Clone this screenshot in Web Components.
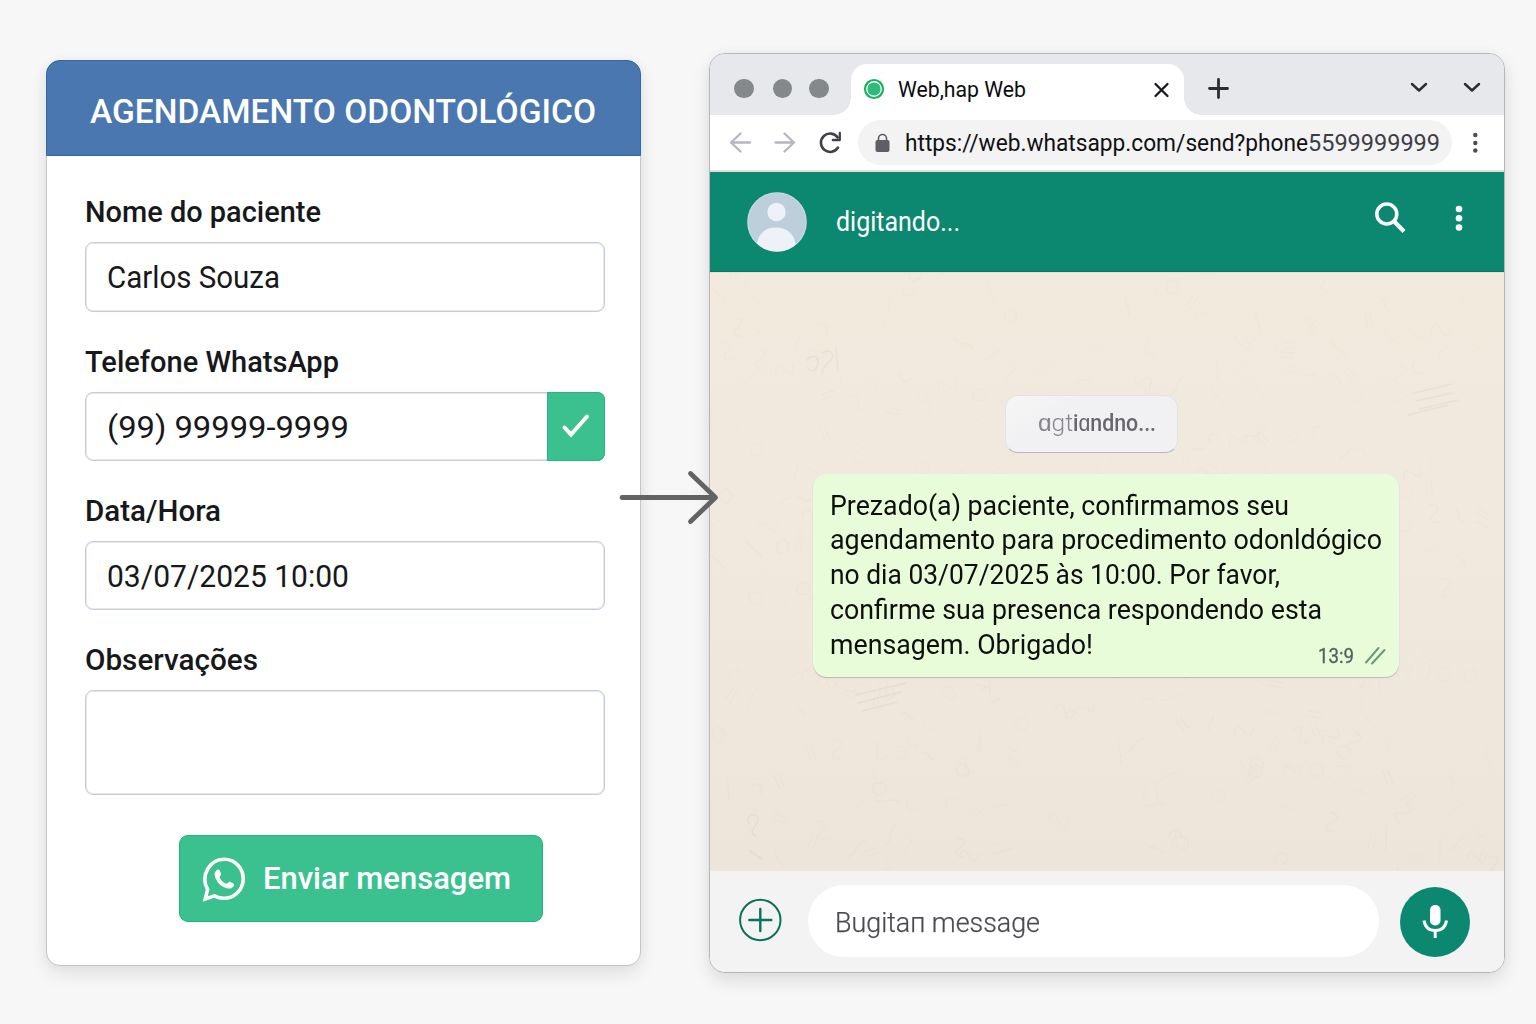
<!DOCTYPE html>
<html lang="pt-BR">
<head>
<meta charset="utf-8">
<title>Agendamento Odontológico</title>
<style>
html,body{margin:0;height:100%}
body{background:#f6f6f6;font-family:Roboto,"Liberation Sans",sans-serif;color:#17181b;overflow:hidden}
</style>
</head>
<body>
<demo-stage></demo-stage>
<script>
const define=(name,html,setup)=>customElements.define(name,class extends HTMLElement{
  constructor(){super();this.attachShadow({mode:'open'}).innerHTML=html;}
  connectedCallback(){if(setup)setup.call(this,this.shadowRoot);}
});

/* Single line of text condensed or expanded to the width in "w". */
define('fit-text',`<style>
:host{display:block;white-space:pre;flex:none}
span{display:inline-block;transform-origin:0 50%}
</style><span><slot></slot></span>`,function(r){
  const w=+this.getAttribute('w'),s=r.querySelector('span');
  this.style.width=w+'px';
  const fit=()=>{s.style.transform='none';const n=s.getBoundingClientRect().width;if(n)s.style.transform='scaleX('+w/n+')';};
  fit();requestAnimationFrame(fit);
});

define('form-field',`<style>
:host{display:block}
.label{font-size:29.500px;line-height:34px;font-weight:500;height:34px;margin-bottom:13px}
.box{display:flex;align-items:center;box-sizing:border-box;height:var(--h,69px);border:1px solid #c6cad9;border-radius:8px;background:#fff;box-shadow:inset 0 0 0 1px #e6e8f0;padding:2px 0 0 21px;font-size:31px;line-height:36px}
</style>
<div class="label"><slot name="label"></slot></div>
<div class="box"><slot></slot><slot name="end"></slot></div>`);

define('valid-mark',`<style>
:host{display:flex;align-items:center;justify-content:center;width:58px;height:69px;margin:-3px -1px -1px auto;background:#3bc18f;border-radius:0 8px 8px 0;box-shadow:inset 0 0 0 1px #25b880}
</style><svg width="58" height="70" viewBox="0 0 58 70" fill="none" stroke="#fff" stroke-width="4" stroke-linecap="round" stroke-linejoin="miter"><path d="M17.500 35.500 24 42.500 40 24.500"/></svg>`);

define('send-button',`<style>
:host{display:flex;align-items:center;box-sizing:border-box;width:364px;height:87px;border-radius:9px;background:#3bc18f;border:1px solid #20b67b;color:#fff;padding-left:22px;gap:17px;font-size:31px;font-weight:500;line-height:36px}
</style>
<svg width="44" height="46" viewBox="0 0 44 46"><path d="M3.200 43 5.600 33.400C-1.700 20.500 7 3.200 22.200 3.200c10.800 0 19 8.700 19 19.500s-8.500 19.600-19.300 19.600c-3.500 0-6.500-.8-9.400-2.400Z" fill="none" stroke="#fff" stroke-width="3.600" stroke-linejoin="miter"/><path d="M14.300 14.400c1.100-1.200 2.700-1.200 3.400.2l1.200 3c.4 1-.1 1.800-.9 2.600-.6.700-.4 1.400 0 2.100 1.500 2.500 3.400 4.300 5.900 5.300.8.300 1.300.1 1.900-.6.900-1.100 1.600-1.400 2.600-1l2.900 1.500c1 .5.900 1.500.4 2.500-1 2-3.300 2.900-5.500 2.500-7-1.200-12.700-7-13.600-13.800-.2-1.700.6-3.200 1.700-4.300Z" fill="#fff"/></svg>
<slot></slot>`);

define('booking-card',`<style>
:host{display:flex;flex-direction:column;box-sizing:border-box;width:595px;height:906px;border:1px solid #c3c5cb;border-radius:14px;background:#fff;box-shadow:0 8px 18px rgba(0,0,0,.09),0 0 12px rgba(0,0,0,.03)}
header{margin:-1px -1px 0;height:96px;flex:none;box-sizing:border-box;background:#4a77b0;border:1px solid #2f69ab;border-radius:14px 14px 0 0;color:#fff;display:flex;align-items:center;padding:5px 0 0 43px;font-size:34px;font-weight:500;line-height:40px}
main{display:flex;flex-direction:column;padding:39px 35px 0 38px}
form-field{margin-bottom:33px}
form-field:first-of-type{--h:70px}
form-field:last-of-type{margin-bottom:40px;--h:105px}
send-button{margin-left:94px}
</style>
<header><fit-text w="506">AGENDAMENTO ODONTOLÓGICO</fit-text></header>
<main>
<form-field><fit-text slot="label" w="236">Nome do paciente</fit-text><fit-text w="173">Carlos Souza</fit-text></form-field>
<form-field><fit-text slot="label" w="254">Telefone WhatsApp</fit-text><fit-text w="242">(99) 99999-9999</fit-text><valid-mark slot="end"></valid-mark></form-field>
<form-field><fit-text slot="label" w="136">Data/Hora</fit-text><fit-text w="242">03/07/2025 10:00</fit-text></form-field>
<form-field><fit-text slot="label" w="173">Observações</fit-text></form-field>
<send-button><fit-text w="248">Enviar mensagem</fit-text></send-button>
</main>`);

define('tab-strip',`<style>
:host{display:flex;height:61px;background:#e7e8ec;align-items:flex-end}
.dots{display:flex;gap:19px;width:141px;box-sizing:border-box;padding-left:24px;height:61px;align-items:center;padding-top:8px}
i{width:19.500px;height:19.500px;border-radius:50%;background:#85888b;flex:none}
i:last-child{margin-left:-2px}
.tab{position:relative;display:flex;align-items:center;box-sizing:border-box;width:333px;height:51px;background:#fff;border-radius:16px 16px 0 0;padding-left:12px;font-size:21.500px;line-height:26px;color:#0c0c0e}
.tab::before,.tab::after{content:"";position:absolute;bottom:0;width:17px;height:17px}
.tab::before{right:100%;background:radial-gradient(circle at 0 0,transparent 16.500px,#fff 17px)}
.tab::after{left:100%;background:radial-gradient(circle at 100% 0,transparent 16.500px,#fff 17px)}
fit-text{margin-left:13px;margin-top:1px}
.x{margin-left:126px;margin-top:1px}
.ring{margin-top:-1px}
.rest{display:flex;flex:1;height:61px}
</style>
<div class="dots"><i></i><i></i><i></i></div>
<div class="tab"><svg class="ring" width="22" height="22" viewBox="0 0 22 22"><circle cx="11" cy="11" r="9" fill="#fff" stroke="#16b364" stroke-width="2.200"/><circle cx="11" cy="11" r="6.600" fill="#2fba79"/></svg><fit-text w="128">Web,hap Web</fit-text>
<svg class="x" width="20" height="20" viewBox="0 0 20 20" stroke="#18191c" stroke-width="2.300" stroke-linecap="round"><path d="M3.500 4l12 12M15.500 4l-12 12"/></svg></div>
<div class="rest"><svg width="319" height="61" viewBox="0 0 319 61" fill="none" stroke="#2c2d31" stroke-width="2.400" stroke-linecap="round" stroke-linejoin="round"><path stroke-width="2.800" d="M25.500 34.500h18M34.500 25.500v18"/><path d="M228 30l7 6.500 7-6.500M281 30l7 6.500 7-6.500"/></svg></div>`);

define('address-bar',`<style>
:host{display:flex;align-items:center;height:57px;background:#fff;border-bottom:2px solid #e2ddda;box-sizing:border-box}
.nav{flex:none}
.url{display:flex;align-items:center;box-sizing:border-box;width:594px;height:45px;border-radius:23px;background:#f3f3f4;padding-left:17px;gap:15px;font-size:24px;line-height:28px;color:#101114}
.t{display:flex}
.n{color:#3c3e46}
</style>
<svg class="nav" width="148" height="54" viewBox="0 0 148 54" fill="none" stroke="#b4b7be" stroke-width="2.300" stroke-linecap="round" stroke-linejoin="round"><path d="M40 26.500H21.500M30.500 17.500l-9.500 9 9.500 9M65.500 26.500H84M74.500 17.500l9.500 9-9.500 9"/><path stroke="#3f4146" stroke-width="2.600" d="M128 31.500a9.200 9.200 0 1 1-.3-10"/><path stroke="#3f4146" stroke-width="2.300" d="M129.800 17v7h-7"/></svg>
<div class="url"><svg width="15" height="20" viewBox="0 0 15 20"><path d="M3.500 8V5.500a4 4 0 0 1 8 0V8" fill="none" stroke="#5d5f64" stroke-width="1.600"/><rect x=".5" y="7" width="14" height="12" rx="2" fill="#5d5f64"/></svg>
<div class="t"><fit-text w="403">https://web.whatsapp.com/send?phone</fit-text><fit-text class="n" w="132">5599999999</fit-text></div></div>
<svg class="nav" width="50" height="54" viewBox="0 0 50 54" fill="#4c4e53"><circle cx="23.300" cy="19" r="2.200"/><circle cx="23.300" cy="27" r="2.200"/><circle cx="23.300" cy="34.500" r="2.200"/></svg>`);

define('chat-header',`<style>
:host{display:flex;align-items:center;height:100px;background:#0c8770;border-bottom:1px solid #087961;box-sizing:border-box;padding-left:36.500px;color:#fff;font-size:27px;line-height:32px}
fit-text{margin-left:29.500px}
.act{margin-left:auto}
</style>
<svg width="60" height="60" viewBox="0 0 60 60"><defs><clipPath id="c"><circle cx="30" cy="30" r="29.500"/></clipPath></defs><circle cx="30" cy="30" r="29.800" fill="#d3e1e9"/><circle cx="30" cy="30" r="29" fill="#bccfdb"/><g clip-path="url(#c)" fill="#eef1f8"><circle cx="29.500" cy="20" r="9.200"/><path d="M9.500 56C10 43 17 35.500 29 35.500S48.500 43 49 56L40 61H20Z"/></g></svg>
<fit-text w="124">digitando...</fit-text>
<svg class="act" width="134" height="100" viewBox="0 0 134 100" fill="none" stroke="#fff"><circle cx="16.800" cy="42" r="10" stroke-width="3.500"/><path d="M23.800 49 34 59.500" stroke-width="4.200" stroke-linecap="butt"/><g fill="#fff" stroke="none"><circle cx="89" cy="37" r="3.300"/><circle cx="89" cy="46.300" r="3.300"/><circle cx="89" cy="55.500" r="3.300"/></g></svg>`);

define('typing-pill',`<style>
:host{display:flex;align-items:center;box-sizing:border-box;width:173px;height:58px;border-radius:13px;background:linear-gradient(145deg,#f7f6f6,#f1f1f3 30%);border:1px solid #e5e2e3;border-bottom-color:#b9b5ba;padding-left:32px;font-size:24px;line-height:28px;color:#66676c;font-weight:500}
.a{font-weight:300;color:#85868b}
.t{display:flex;margin-top:-2px}
</style><div class="t"><fit-text class="a" w="35">ɑgt</fit-text><fit-text w="83">iɑndno...</fit-text></div>`);

define('message-bubble',`<style>
:host{display:flex;flex-direction:column;box-sizing:border-box;width:586px;height:203px;border-radius:14px;background:#e8fcda;padding:14.500px 17px 0;font-size:27.500px;line-height:34.800px;color:#0e100e;box-shadow:0 1px 1px rgba(120,90,80,.35)}
.meta{display:flex;align-items:center;margin-left:auto;margin-top:-18px;margin-right:-6px;gap:10px;font-size:20px;line-height:24px;color:#54615a;-webkit-text-stroke:.3px #54615a}
</style><slot></slot><div class="meta"><fit-text w="36">13:9</fit-text><svg width="24" height="20" viewBox="0 0 24 20" stroke="#6f9579" stroke-width="2" stroke-linecap="round"><path d="M2 16.500 14.500 2M8 17.500 20.500 4"/></svg></div>`);

/* Chat area with a faint doodle wallpaper. */
define('chat-body',`<style>
:host{display:grid;height:599px;background:linear-gradient(#f3eade,#f1e8de 40%,#ede4da);border-top:1px solid #eaddd3;box-sizing:border-box}
svg,.col{grid-area:1/1}
.col{display:flex;flex-direction:column;align-items:flex-start;padding-top:122px;gap:21px}
typing-pill{margin-left:295px}
message-bubble{margin-left:103px}
</style>
<svg width="794" height="598" viewBox="0 0 794 598" fill="none" stroke="#cdbdae" stroke-width="1.200" stroke-linecap="round"><g id="d" opacity=".11"></g>
<g stroke="#bda999" opacity=".13" stroke-width="1.600"><path d="M97 87c5-6 12-4 11 3s-7 11-10 5M112 80c8-5 14 2 9 7s-10 10-9 14M126 75l2 22M704 120l38-9M706 128l36-8M710 136l38-9M698 142l40-10M146 422l50-12M148 430l43-11M152 438l35-9M39 550c-5-8 9-12 9-4s-12 12-2 17M40 578l12 8"/></g></svg>
<div class="col"><typing-pill></typing-pill>
<message-bubble>
<fit-text w="459">Prezado(a) paciente, confirmamos seu</fit-text>
<fit-text w="552">agendamento para procedimento odonldógico</fit-text>
<fit-text w="450">no dia 03/07/2025 às 10:00. Por favor,</fit-text>
<fit-text w="492">confirme sua presenca respondendo esta</fit-text>
<fit-text w="263">mensagem. Obrigado!</fit-text>
</message-bubble></div>`,function(r){
  let seed=11;const rnd=()=>(seed=(seed*16807)%2147483647)/2147483647;
  const shapes=['M0 0c4-8 14-6 12 2s-12 9-12-2','M0 0l11-9M3 4l11-9','M0 0c5 9 13 5 18 12','M0 0c3 6-4 9 2 14','M0 6a6 6 0 1 0 12 0','M0 0q6-13 10 0t10 0','M0 0c-4 10 3 15-1 24'];
  let out='';
  for(let i=0;i<380;i++){out+='<path transform="translate('+(rnd()*780|0)+' '+(rnd()*590|0)+') rotate('+(rnd()*360|0)+')" opacity="'+(.25+rnd()*.6).toFixed(2)+'" d="'+shapes[rnd()*7|0]+'"/>';}
  r.querySelector('#d').innerHTML=out;
});

define('chat-composer',`<style>
:host{display:flex;align-items:center;flex:1;background:#f3f3f3;padding-left:29px}
.in{display:flex;align-items:center;box-sizing:border-box;width:570.500px;height:72px;margin:-1px 0 0 26px;border-radius:36px;background:#fff;padding:3px 0 0 27px;font-size:27px;line-height:32px;color:#4a4b50;font-weight:300;-webkit-text-stroke:.25px #4a4b50}
.mic{margin-left:21px}
.add{margin-top:-4px}
</style>
<svg class="add" width="43" height="44" viewBox="0 0 43 44" fill="none" stroke="#08735a" stroke-linecap="round"><circle cx="21.300" cy="22" r="20.200" stroke-width="2"/><path stroke-width="2.400" d="M10.300 22h22M21.300 11v22"/></svg>
<div class="in"><fit-text w="205">Bugitaп message</fit-text></div>
<svg class="mic" width="70" height="70" viewBox="0 0 70 70"><circle cx="35" cy="35" r="35" fill="#0c8770"/><rect x="30" y="18" width="10.500" height="20.500" rx="5" fill="#fff"/><path d="M24 33.500c1 6.500 5 10 11.200 10s10.300-3.500 11.300-10M35.200 43v8" fill="none" stroke="#fff" stroke-width="3"/></svg>`);

define('browser-window',`<style>
:host{display:flex;flex-direction:column;box-sizing:border-box;width:796px;height:920px;border:1px solid #b4b6ba;border-radius:16px;overflow:hidden;background:#fff;box-shadow:0 8px 18px rgba(0,0,0,.10),0 0 12px rgba(0,0,0,.03)}
</style><tab-strip></tab-strip><address-bar></address-bar><chat-header></chat-header><chat-body></chat-body><chat-composer></chat-composer>`);

define('flow-arrow',`<style>
:host{position:absolute;left:616px;top:466px;line-height:0}
</style><svg width="106" height="62" viewBox="0 0 106 62" fill="none" stroke="#626365" stroke-width="4.800" stroke-linecap="round" stroke-linejoin="round"><path d="M6 31.500H99M74.500 7.500 99.500 31.500 74.500 55.500"/></svg>`);

define('demo-stage',`<style>
:host{display:flex;align-items:flex-start;box-sizing:border-box;width:1536px;height:1024px;padding:53px 0 0 46px;gap:68px;background:#f7f7f7}
booking-card{margin-top:7px}
</style><booking-card></booking-card><browser-window></browser-window><flow-arrow></flow-arrow>`);
</script>
</body>
</html>
